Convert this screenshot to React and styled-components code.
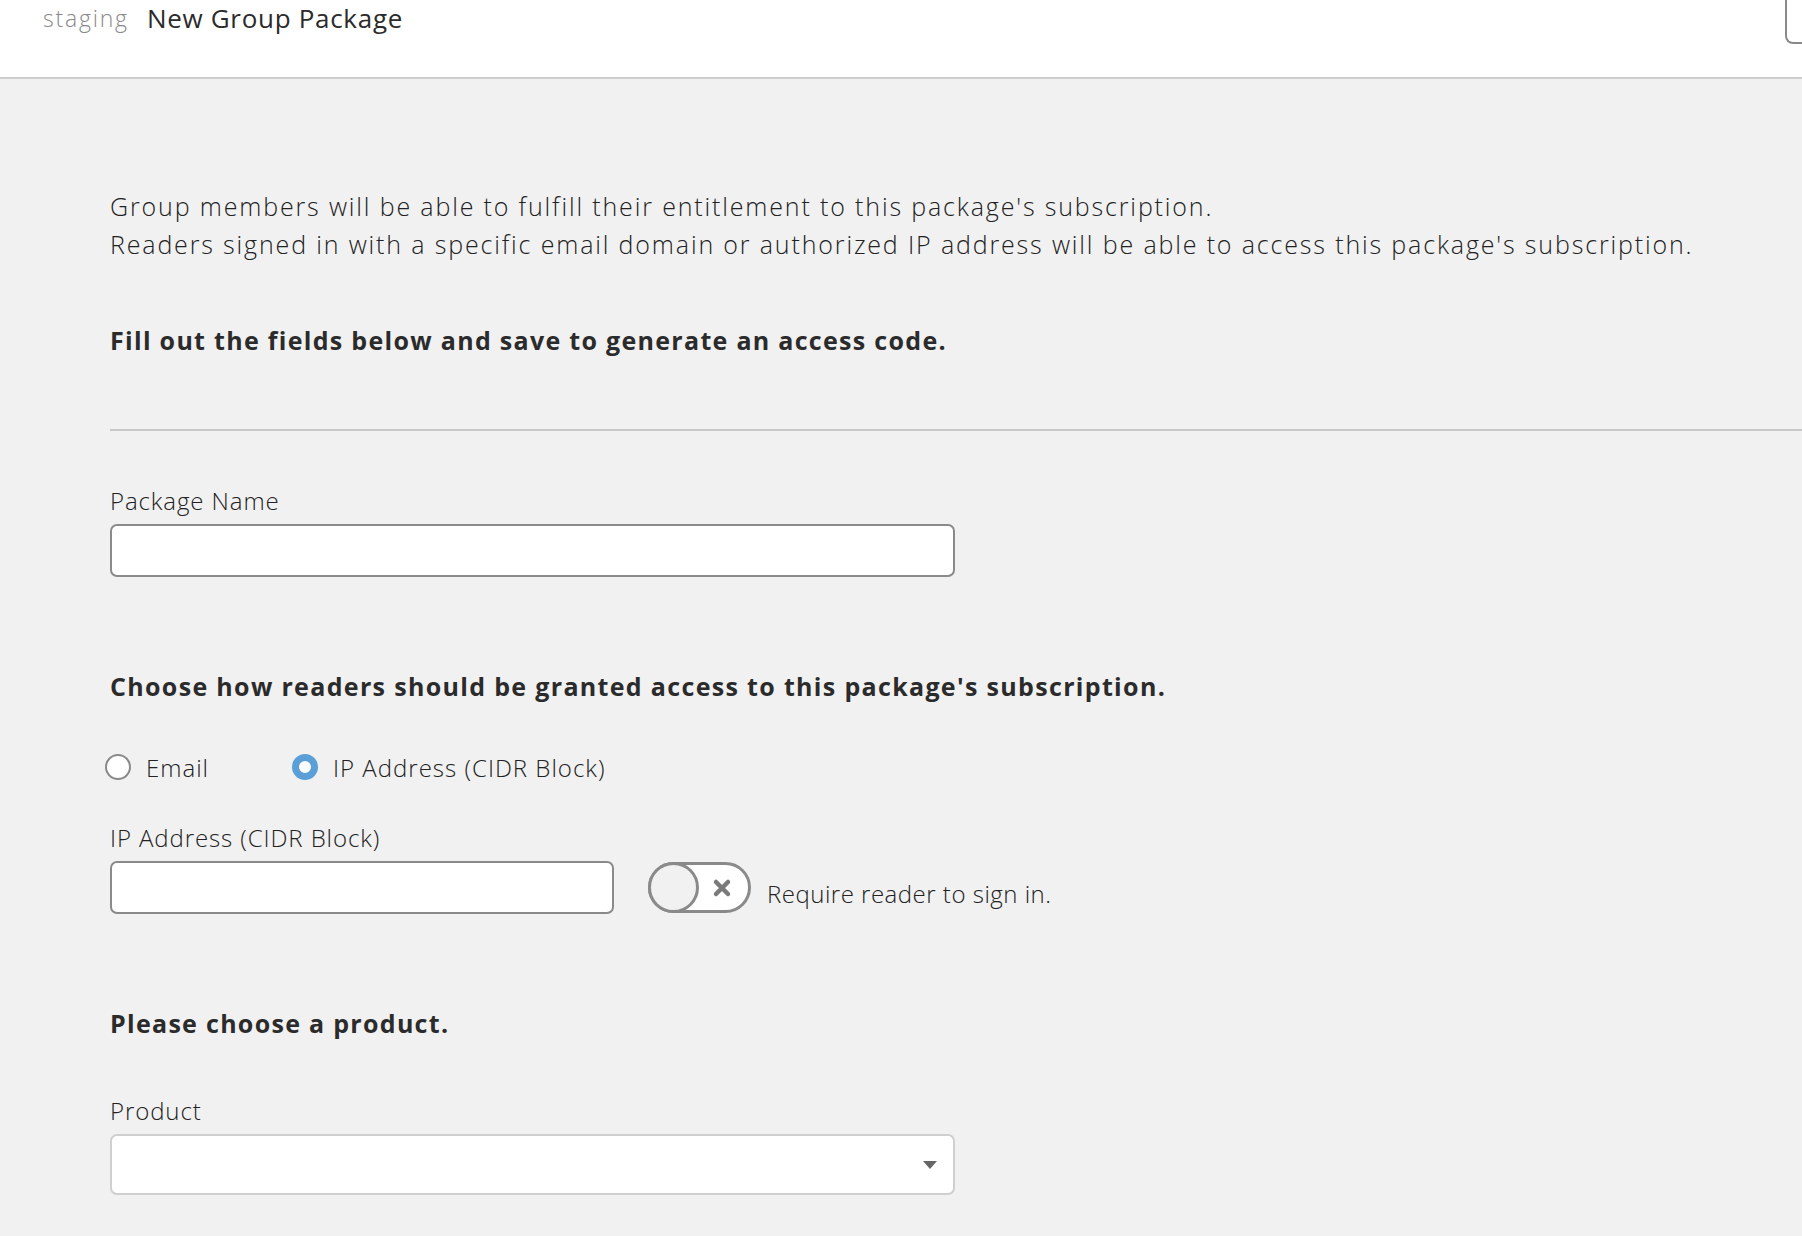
import React, { useState } from "react";
import styled, { createGlobalStyle } from "styled-components";

const GlobalStyle = createGlobalStyle`
  html, body {
    margin: 0;
    padding: 0;
    background: #f1f1f1;
  }
  body {
    font-family: "Open Sans", "Noto Sans", "Liberation Sans", sans-serif;
    color: #333;
  }
  * { box-sizing: border-box; }
`;

function App() {
  const [method, setMethod] = useState("ip");
  const [requireSignIn, setRequireSignIn] = useState(false);

  return (
    <Page>
      <GlobalStyle />
      <Header>
        <Env>staging</Env>
        <Title>New Group Package</Title>
        <CornerButton />
      </Header>
      <Main>
        <Intro>
          Group members will be able to fulfill their entitlement to this package's subscription.
          <br />
          Readers signed in with a specific email domain or authorized IP address will be able to access this package's subscription.
        </Intro>
        <Heading top={58} spacing={1.3}>Fill out the fields below and save to generate an access code.</Heading>
        <Divider />

        <Field top={55}>
          <Label>Package Name</Label>
          <TextInput width={845} />
        </Field>

        <Heading top={90} spacing={1.33}>Choose how readers should be granted access to this package's subscription.</Heading>

        <RadioRow>
          <RadioOption onClick={() => setMethod("email")}>
            <RadioDot checked={method === "email"} />
            Email
          </RadioOption>
          <RadioOption onClick={() => setMethod("ip")}>
            <RadioDot checked={method === "ip"} />
            IP Address (CIDR Block)
          </RadioOption>
        </RadioRow>

        <Field top={37}>
          <Label>IP Address (CIDR Block)</Label>
          <InlineRow>
            <TextInput width={504} />
            <Toggle on={requireSignIn} onClick={() => setRequireSignIn(!requireSignIn)}>
              <Knob on={requireSignIn} />
              <svg width="20" height="20" viewBox="0 0 20 20">
                <path d="M4 4 L16 16 M16 4 L4 16" stroke="#7a7a7a" strokeWidth="4.5" strokeLinecap="round" />
              </svg>
            </Toggle>
            <ToggleText>Require reader to sign in.</ToggleText>
          </InlineRow>
        </Field>

        <Heading top={90} spacing={1.3}>Please choose a product.</Heading>

        <Field top={54}>
          <Label>Product</Label>
          <SelectBox>
            <Caret />
          </SelectBox>
        </Field>
      </Main>
    </Page>
  );
}

const Page = styled.div`
  min-height: 1236px;
  background: #f1f1f1;
  overflow: hidden;
`;

const Header = styled.header`
  height: 79px;
  background: #fff;
  border-bottom: 2px solid #cdcdcd;
  display: flex;
  align-items: flex-start;
  padding-left: 43px;
`;

const Env = styled.span`
  font-size: 23px;
  line-height: 36px;
  color: #8a8a8a;
  font-weight: 300;
  letter-spacing: 1.8px;
`;

const Title = styled.h1`
  margin: 0 0 0 18px;
  font-size: 26px;
  line-height: 36px;
  font-weight: 400;
  color: #2b2b2b;
  letter-spacing: 0.7px;
`;

const CornerButton = styled.div`
  margin-left: auto;
  width: 17px;
  height: 44px;
  border: 2px solid #8a8a8a;
  border-top: none;
  border-right: none;
  border-bottom-left-radius: 8px;
`;

const Main = styled.main`
  padding: 108px 0 40px 110px;
`;

const Intro = styled.p`
  margin: 0;
  font-size: 25px;
  line-height: 38px;
  font-weight: 300;
  color: #222;
  letter-spacing: 1.85px;
`;

const Heading = styled.h2`
  margin: ${(p) => p.top}px 0 0;
  font-size: 25px;
  line-height: 38px;
  font-weight: 700;
  color: #2b2b2b;
  letter-spacing: ${(p) => p.spacing}px;
`;

const Divider = styled.hr`
  margin: 70px 0 0;
  border: none;
  border-top: 2px solid #c8c8c8;
`;

const Field = styled.div`
  margin-top: ${(p) => p.top}px;
`;

const Label = styled.label`
  display: block;
  font-size: 24px;
  line-height: 30px;
  font-weight: 300;
  color: #222;
  margin-bottom: 8px;
  letter-spacing: 0.9px;
`;

const TextInput = styled.input`
  display: block;
  width: ${(p) => p.width}px;
  height: 53px;
  border: 2px solid #8a8a8a;
  border-radius: 7px;
  background: #fff;
  font-size: 22px;
  padding: 0 12px;
  outline: none;
`;

const RadioRow = styled.div`
  margin: 43px 0 0 -5px;
  display: flex;
  gap: 83px;
  height: 38px;
  align-items: center;
`;

const RadioOption = styled.div`
  display: flex;
  align-items: center;
  gap: 15px;
  font-size: 24px;
  font-weight: 300;
  color: #222;
  letter-spacing: 1px;
  cursor: pointer;
`;

const RadioDot = styled.span`
  width: 26px;
  height: 26px;
  border-radius: 50%;
  background: #fff;
  border: ${(p) => (p.checked ? "7px solid #5b9fd9" : "2px solid #8a8a8a")};
`;

const InlineRow = styled.div`
  display: flex;
  align-items: center;
`;

const Toggle = styled.div`
  margin-left: 34px;
  width: 103px;
  height: 51px;
  border: 3px solid #8a8a8a;
  border-radius: 26px;
  background: #fff;
  display: flex;
  align-items: center;
  justify-content: flex-end;
  padding-right: 16px;
  position: relative;
  cursor: pointer;
`;

const Knob = styled.span`
  position: absolute;
  left: -3px;
  top: -3px;
  width: 51px;
  height: 51px;
  border-radius: 50%;
  border: 3px solid #8a8a8a;
  background: #f1f1f1;
`;

const ToggleText = styled.span`
  margin: 12px 0 0 16px;
  font-size: 24px;
  font-weight: 300;
  color: #222;
  letter-spacing: 0.5px;
`;

const SelectBox = styled.div`
  width: 845px;
  height: 61px;
  background: #fff;
  border: 2px solid #cfcfcf;
  border-radius: 7px;
  display: flex;
  align-items: center;
  justify-content: flex-end;
  padding-right: 16px;
`;

const Caret = styled.span`
  width: 0;
  height: 0;
  border-left: 7px solid transparent;
  border-right: 7px solid transparent;
  border-top: 8px solid #666;
`;

export default App;
